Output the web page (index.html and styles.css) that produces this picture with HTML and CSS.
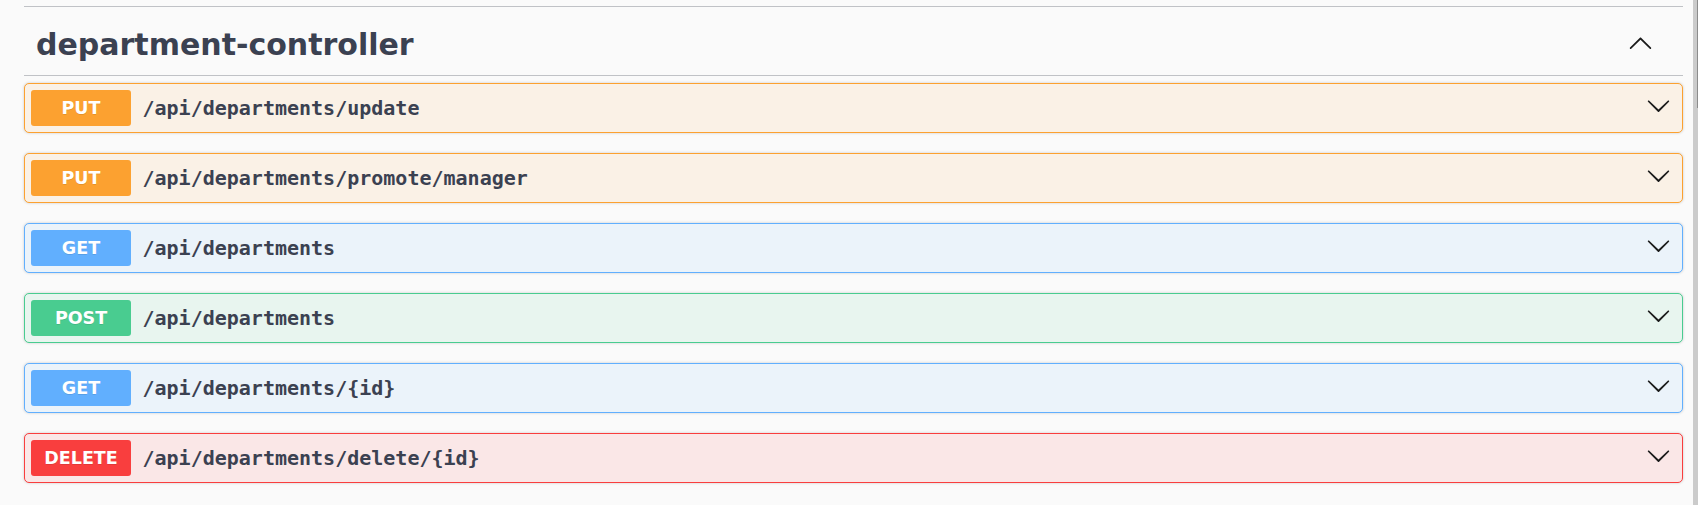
FILE: index.html
```html
<!DOCTYPE html>
<html lang="en">
<head>
<meta charset="utf-8">
<title>department-controller</title>
<link rel="stylesheet" href="styles.css">
</head>
<body>
<div class="page">
  <main class="section">
    <div class="tag-header">
      <h3 class="tag-title">department-controller</h3>
      <svg class="arrow arrow-up" width="25" height="25" viewBox="0 0 20 20" aria-hidden="true"><path d="M17.418 14.908c.272.268.709.268.979 0s.271-.701 0-.969l-7.908-7.83c-.27-.268-.707-.268-.979 0l-7.908 7.83c-.27.268-.27.701 0 .969.271.268.709.268.979 0L10 7.767l7.418 7.141z"/></svg>
    </div>
    <div class="ops">
      <div class="op op-put">
        <span class="method">PUT</span>
        <span class="path">/api/departments/update</span>
        <svg class="arrow arrow-down" width="25" height="25" viewBox="0 0 20 20" aria-hidden="true"><path d="M17.418 6.109c.272-.268.709-.268.979 0s.271.701 0 .969l-7.908 7.83c-.27.268-.707.268-.979 0l-7.908-7.83c-.27-.268-.27-.701 0-.969.271-.268.709-.268.979 0L10 13.25l7.418-7.141z"/></svg>
      </div>
      <div class="op op-put">
        <span class="method">PUT</span>
        <span class="path">/api/departments/promote/manager</span>
        <svg class="arrow arrow-down" width="25" height="25" viewBox="0 0 20 20" aria-hidden="true"><path d="M17.418 6.109c.272-.268.709-.268.979 0s.271.701 0 .969l-7.908 7.83c-.27.268-.707.268-.979 0l-7.908-7.83c-.27-.268-.27-.701 0-.969.271-.268.709-.268.979 0L10 13.25l7.418-7.141z"/></svg>
      </div>
      <div class="op op-get">
        <span class="method">GET</span>
        <span class="path">/api/departments</span>
        <svg class="arrow arrow-down" width="25" height="25" viewBox="0 0 20 20" aria-hidden="true"><path d="M17.418 6.109c.272-.268.709-.268.979 0s.271.701 0 .969l-7.908 7.83c-.27.268-.707.268-.979 0l-7.908-7.83c-.27-.268-.27-.701 0-.969.271-.268.709-.268.979 0L10 13.25l7.418-7.141z"/></svg>
      </div>
      <div class="op op-post">
        <span class="method">POST</span>
        <span class="path">/api/departments</span>
        <svg class="arrow arrow-down" width="25" height="25" viewBox="0 0 20 20" aria-hidden="true"><path d="M17.418 6.109c.272-.268.709-.268.979 0s.271.701 0 .969l-7.908 7.83c-.27.268-.707.268-.979 0l-7.908-7.83c-.27-.268-.27-.701 0-.969.271-.268.709-.268.979 0L10 13.25l7.418-7.141z"/></svg>
      </div>
      <div class="op op-get">
        <span class="method">GET</span>
        <span class="path">/api/departments/{id}</span>
        <svg class="arrow arrow-down" width="25" height="25" viewBox="0 0 20 20" aria-hidden="true"><path d="M17.418 6.109c.272-.268.709-.268.979 0s.271.701 0 .969l-7.908 7.83c-.27.268-.707.268-.979 0l-7.908-7.83c-.27-.268-.27-.701 0-.969.271-.268.709-.268.979 0L10 13.25l7.418-7.141z"/></svg>
      </div>
      <div class="op op-delete">
        <span class="method">DELETE</span>
        <span class="path">/api/departments/delete/{id}</span>
        <svg class="arrow arrow-down" width="25" height="25" viewBox="0 0 20 20" aria-hidden="true"><path d="M17.418 6.109c.272-.268.709-.268.979 0s.271.701 0 .969l-7.908 7.83c-.27.268-.707.268-.979 0l-7.908-7.83c-.27-.268-.27-.701 0-.969.271-.268.709-.268.979 0L10 13.25l7.418-7.141z"/></svg>
      </div>
    </div>
  </main>
  <div class="scrollbar"><div class="thumb"></div></div>
</div>
</body>
</html>
```
FILE: styles.css
```css
html, body {
  margin: 0;
  padding: 0;
  background: #fafafa;
  height: 100%;
  overflow: hidden;
}

.page {
  display: flex;
  height: 505px;
  font-family: "DejaVu Sans", sans-serif;
}

.section {
  width: 1659px;
  margin-left: 24px;
  padding-top: 6px;
}

.tag-header {
  display: flex;
  align-items: center;
  height: 68px;
  padding: 0 30px 0 12px;
  border-top: 1px solid rgba(59, 65, 81, 0.3);
  border-bottom: 1px solid rgba(59, 65, 81, 0.3);
}

.tag-title {
  flex: 1;
  margin: 0;
  padding-top: 6px;
  font-family: "DejaVu Sans", sans-serif;
  font-weight: 700;
  font-size: 30px;
  line-height: normal;
  color: #3b4151;
}

.arrow {
  display: block;
  flex: none;
  fill: #1b1b1b;
}

.arrow-up {
  margin-top: 2px;
}

.ops {
  display: flex;
  flex-direction: column;
  gap: 20px;
  margin-top: 7px;
}

.op {
  display: flex;
  align-items: center;
  box-sizing: border-box;
  height: 50px;
  padding: 6px;
  border: 1px solid;
  border-radius: 5px;
  box-shadow: 0 0 3px rgba(0, 0, 0, 0.19);
}

.method {
  flex: none;
  display: flex;
  align-items: center;
  justify-content: center;
  width: 100px;
  height: 36px;
  border-radius: 3px;
  color: #fff;
  font-family: "DejaVu Sans", sans-serif;
  font-weight: 700;
  font-size: 17.5px;
  text-shadow: 0 1px 0 rgba(0, 0, 0, 0.1);
}

.path {
  flex: 1;
  padding-left: 11.5px;
  font-family: "DejaVu Sans Mono", monospace;
  font-weight: 700;
  font-size: 20px;
  color: #3b4151;
}

.arrow-down {
  margin-right: 5.5px;
  margin-bottom: 5px;
}

.op-put { background: #faf1e6; border-color: #fca130; }
.op-put .method { background: #fca130; }

.op-get { background: #ebf3fa; border-color: #61affe; }
.op-get .method { background: #61affe; }

.op-post { background: #e8f5ef; border-color: #49cc90; }
.op-post .method { background: #49cc90; }

.op-delete { background: #fae7e7; border-color: #f93e3e; }
.op-delete .method { background: #f93e3e; }

.scrollbar {
  width: 5px;
  height: 505px;
  margin-left: 10px;
  background: #cbcbcb;
  display: flex;
  justify-content: flex-end;
}

.thumb {
  width: 1px;
  height: 108px;
  background: #8c8c8c;
}
```
